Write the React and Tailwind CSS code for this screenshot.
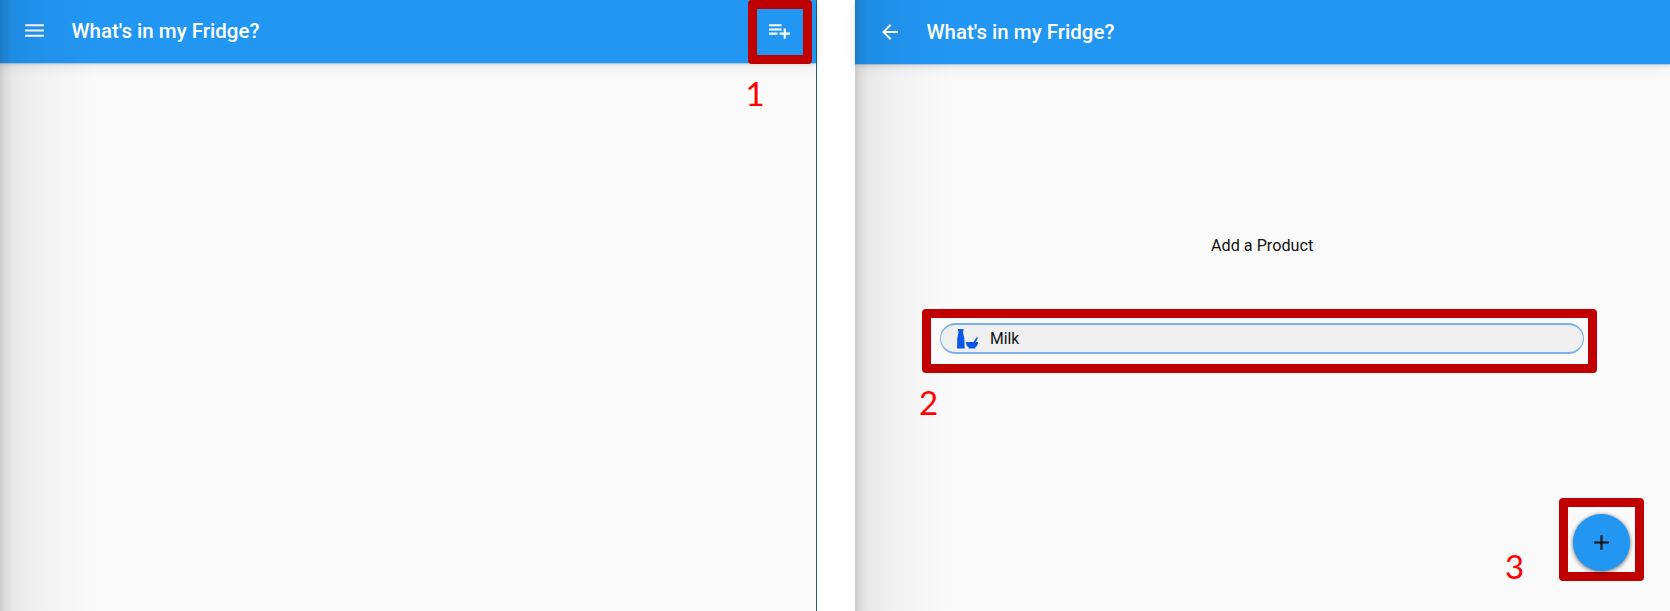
const edgeShade =
  "pointer-events-none absolute inset-y-0 left-0 w-[96px] bg-[linear-gradient(to_right,rgba(0,0,0,0.19)_0px,rgba(0,0,0,0.12)_5px,rgba(0,0,0,0.07)_13px,rgba(0,0,0,0.052)_26px,rgba(0,0,0,0.03)_44px,rgba(0,0,0,0.015)_68px,transparent_96px)]";

function Icon({ d, className }) {
  return (
    <svg viewBox="0 0 24 24" fill="currentColor" className={className} aria-hidden="true">
      <path d={d} />
    </svg>
  );
}

function Step({ n, className }) {
  return (
    <span className={"absolute font-['Lato',sans-serif] text-[33px] leading-[40px] text-[#ff0000] " + className}>
      {n}
    </span>
  );
}

function FridgeList() {
  return (
    <section className="relative flex w-[817px] flex-col border-r border-[#1f5f7a] bg-[#fafafa]">
      <header className="flex h-[63px] shrink-0 items-center bg-[#2196f3] pl-[22px] pr-[24px] text-white shadow-[0_1px_0_rgba(120,180,230,0.5),0_2px_4px_rgba(0,0,0,0.1),0_4px_14px_rgba(0,0,0,0.06)]">
        <Icon className="mt-[-2px] h-[25px] w-[25px]" d="M3 18h18v-2H3v2zm0-5h18v-2H3v2zm0-7v2h18V6H3z" />
        <h1 className="ml-[24.5px] mt-[-2px] flex-1 text-[20.5px] leading-[24px] font-medium">What's in my Fridge?</h1>
        <Icon
          className="mt-[-2px] h-[25px] w-[25px]"
          d="M14 10H2v2h12v-2zm0-4H2v2h12V6zm4 8v-4h-2v4h-4v2h4v4h2v-4h4v-2h-4zM2 16h8v-2H2v2z"
        />
      </header>
      <div className={edgeShade} />
      <div className="absolute left-[748px] top-0 h-[64px] w-[64px] rounded-[4px] border-[9px] border-[#c00000]" />
      <Step n="1" className="left-[745.5px] top-[73px]" />
    </section>
  );
}

function AddProduct() {
  return (
    <section className="relative flex flex-1 flex-col bg-[#fafafa]">
      <header className="flex h-[64px] shrink-0 items-center bg-[#2196f3] pl-[23px] text-white shadow-[0_1px_0_rgba(120,180,230,0.5),0_2px_4px_rgba(0,0,0,0.1),0_4px_14px_rgba(0,0,0,0.06)]">
        <Icon className="h-[24px] w-[24px]" d="M20 11H7.83l5.59-5.59L12 4l-8 8 8 8 1.41-1.41L7.83 13H20v-2z" />
        <h1 className="ml-[24.5px] text-[20.5px] leading-[24px] font-medium">What's in my Fridge?</h1>
      </header>
      <div className={edgeShade} />
      <main className="relative flex flex-1 flex-col pt-[170px]">
        <p className="pl-[356px] text-[16.2px] leading-[24px] text-[#111]">Add a Product</p>
        <div className="ml-[67px] mt-[51px] h-[64px] w-[675px] rounded-[4px] border-[9px] border-[#c00000] bg-[#fafafa] pl-[9px] pr-[4px] pt-[5px]">
          <button className="flex h-[31px] w-full items-center rounded-full border-x border-y-2 border-[#7db2e6] bg-[#efefef] pl-[16px] text-[15.7px] text-[#111]">
            <svg width="22" height="20" viewBox="0 0 22 20" fill="#0a56e8" className="mt-[1px] shrink-0">
              <path d="M1 0h5.500v1.700L6 2.200 6.300 5l1 4 .4 10.500H0L.3 9l.9-4 .3-2.800L1 1.700z" />
              <path d="M9 13h7.500l3.200-4.800 1.300.8-2.300 4H21c.2 2.600-1.100 4.500-2.700 5.300v1.200h-6.600v-1.200C10 17.500 8.800 15.600 9 13z" />
            </svg>
            <span className="ml-[11px]">Milk</span>
          </button>
        </div>
        <div className="mb-[30px] ml-auto mr-[26px] mt-auto flex h-[83px] w-[85px] items-center justify-center rounded-[4px] border-[9px] border-[#c00000]">
          <button className="mt-[5px] flex h-[57px] w-[57px] items-center justify-center rounded-full bg-[#2196f3] text-[#111] shadow-[0_1px_4px_rgba(0,0,0,0.6)]">
            <Icon className="h-[25px] w-[25px]" d="M19 13h-6v6h-2v-6H5v-2h6V5h2v6h6v2z" />
          </button>
        </div>
      </main>
      <Step n="2" className="left-[64px] top-[382px]" />
      <Step n="3" className="left-[650px] top-[546px]" />
    </section>
  );
}

export default function App() {
  return (
    <div className="flex h-[611px] w-[1670px] gap-[38px] overflow-hidden bg-white font-['Roboto',sans-serif]">
      <FridgeList />
      <AddProduct />
    </div>
  );
}
